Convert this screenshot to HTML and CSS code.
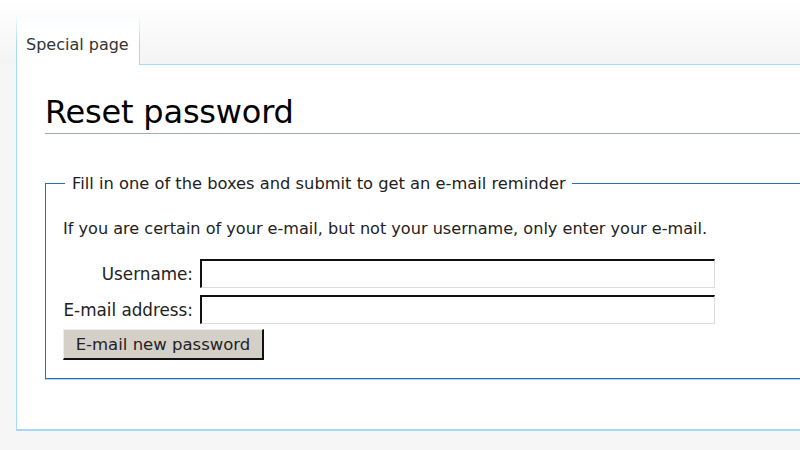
FILE: index.html
```html
<!DOCTYPE html>
<html>
<head>
<meta charset="utf-8">
<link rel="stylesheet" href="styles.css">
</head>
<body>
<div class="header">
  <div class="tab">Special page</div>
  <div class="header-rest"></div>
</div>
<div class="content">
  <h1 class="title">Reset password</h1>
  <fieldset class="box">
    <legend class="legend">Fill in one of the boxes and submit to get an e-mail reminder</legend>
    <p class="intro">If you are certain of your e-mail, but not your username, only enter your e-mail.</p>
    <div class="form-grid">
      <label class="label" for="u">Username:</label>
      <input class="field" id="u" type="text">
      <label class="label" for="e">E-mail address:</label>
      <input class="field" id="e" type="text">
    </div>
    <button class="submit" type="button">E-mail new password</button>
  </fieldset>
</div>
</body>
</html>
```
FILE: styles.css
```css
html, body {
  margin: 0;
  padding: 0;
}
body {
  background: #f6f6f6;
  font-family: "DejaVu Sans", sans-serif;
  color: #222;
  overflow: hidden;
  width: 800px;
  height: 450px;
}
.header {
  display: flex;
  height: 65px;
  padding-left: 16px;
  background: linear-gradient(to bottom, #ffffff 0%, #f4f4f4 100%);
}
.tab {
  box-sizing: border-box;
  width: 124px;
  margin-top: 15px;
  padding: 20px 0 0 9px;
  font-size: 16px;
  color: #333;
  background: linear-gradient(to bottom, #fbfcfd 0%, #ffffff 40%);
  border-left: 1px solid #a7d7f9;
  border-right: 1px solid #a7d7f9;
  border-image: linear-gradient(to bottom, rgba(167,215,249,0) 0%, #a7d7f9 60%) 1;
}
.header-rest {
  flex: 1;
  border-bottom: 1px solid #a7d7f9;
}
.content {
  margin-left: 16px;
  margin-right: -40px;
  height: 366px;
  box-sizing: border-box;
  background: #fff;
  border-left: 1px solid #a7d7f9;
  border-bottom: 2px solid #a7d7f9;
  padding: 27px 0 0 28px;
}
.title {
  margin: 0;
  font-family: "DejaVu Sans", sans-serif;
  font-weight: normal;
  font-size: 32px;
  letter-spacing: -0.2px;
  line-height: 41px;
  color: #000;
  border-bottom: 1px solid #a2a9b1;
}
.box {
  margin: 40px 0 0 0;
  padding: 0 0 18px 17px;
  border: 1px solid #2a6db3;
  border-right: none;
  box-shadow: 0 1px 0 #b4d4f4;
  height: 205px;
  box-sizing: border-box;
}
.legend {
  font-size: 16.3px;
  line-height: 19px;
  padding: 0 6px 0 7px;
  margin-left: 2px;
  color: #222;
}
.intro {
  margin: 26px 0 20px 0;
  font-size: 16.1px;
  line-height: 20px;
}
.form-grid {
  display: grid;
  grid-template-columns: 130px 515px;
  column-gap: 7px;
  row-gap: 7px;
  align-items: center;
}
.label {
  text-align: right;
  font-size: 16.8px;
  white-space: nowrap;
}
.field {
  box-sizing: border-box;
  height: 29px;
  margin: 0;
  border-style: solid;
  border-color: #111 #ddd #ddd #111;
  border-width: 2px 1px 1px 2px;
  background: #fff;
}
.submit {
  margin-top: 5px;
  box-sizing: border-box;
  width: 201px;
  height: 31px;
  font-family: "DejaVu Sans", sans-serif;
  font-size: 16.5px;
  color: #222;
  background: #d4d0c8;
  border-style: solid;
  border-width: 1px 2px 2px 1px;
  border-color: #eee #111 #111 #eee;
  padding: 0;
}
```
